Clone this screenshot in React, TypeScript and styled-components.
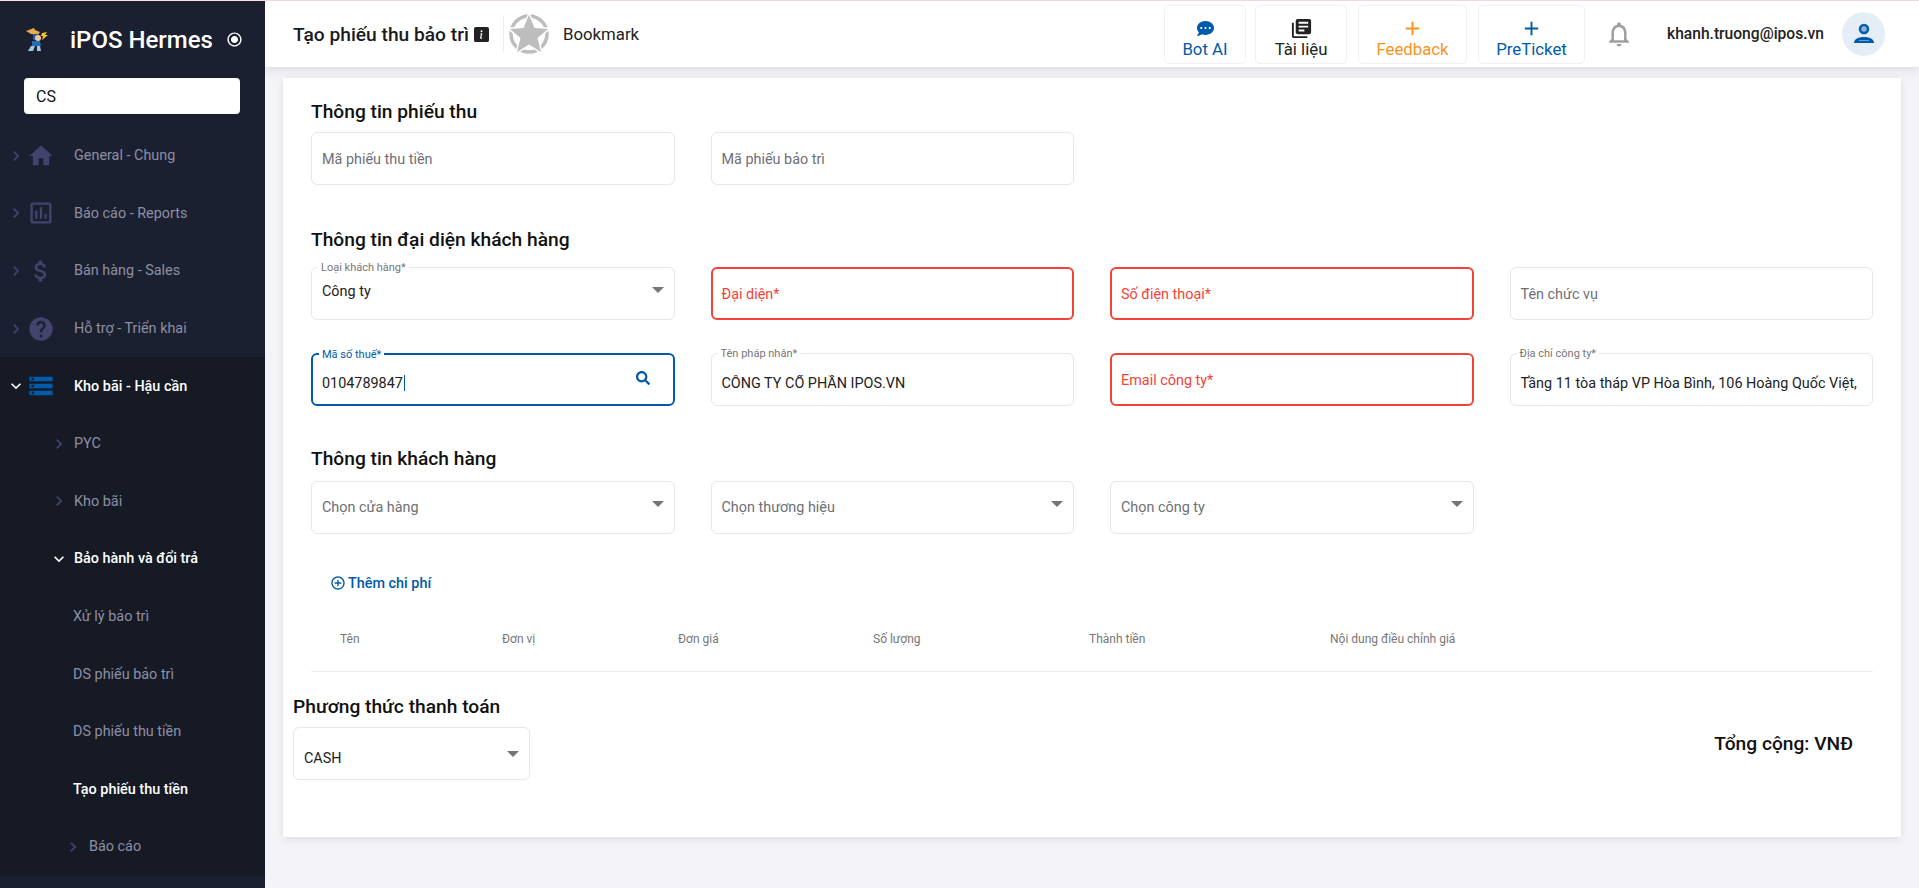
import React from 'react'
import styled, { createGlobalStyle } from 'styled-components'
import {
  MdAdd,
  MdAddCircleOutline,
  MdAttachMoney,
  MdChevronRight,
  MdExpandMore,
  MdHelp,
  MdHome,
  MdLibraryBooks,
  MdNotificationsNone,
  MdOutlineAssessment,
  MdRadioButtonChecked,
  MdStorage,
} from 'react-icons/md'
import { FaCommentDots, FaSearch } from 'react-icons/fa'
import { BsInfoSquareFill } from 'react-icons/bs'

const GlobalStyle = createGlobalStyle`
    html, body {
        margin: 0;
        padding: 0;
        height: 100%;
        overflow: hidden;
        background: #f4f4f8;
        font-family: Roboto, "Liberation Sans", sans-serif;
    }
    * {
        box-sizing: border-box;
    }
`
const Shell = styled.div`
    display: flex;
    flex-direction: column;
    width: 1919px;
    height: 888px;
`
const TopStrip = styled.div`
    height: 1px;
    background: #ffdfe6;
    flex: none;
`
const Body = styled.div`
    display: flex;
    flex: 1;
    min-height: 0;
`
const Sidebar = styled.aside`
    width: 265px;
    flex: none;
    background: #1a2030;
    display: flex;
    flex-direction: column;
`
const Brand = styled.div`
    height: 77px;
    padding: 0 0 0 25px;
    display: flex;
    align-items: center;
    color: #fff;
`
const BrandName = styled.div`
    font-size: 24px;
    font-weight: 500;
    margin-left: 21px;
    margin-right: 13px;
    white-space: nowrap;
`
const SearchBox = styled.div`
    width: 216px;
    height: 36px;
    margin: 0 0 13px 24px;
    padding: 0 12px;
    background: #fff;
    border-radius: 4px;
    display: flex;
    align-items: center;
    font-size: 16px;
    color: #111;
`
const Group = styled.div`
    background: #151a25;
`
const NavRow = styled.div<{ $indent: number; $active?: boolean; $bold?: boolean }>`
    height: 57.6px;
    display: flex;
    align-items: center;
    padding-left: ${p => p.$indent}px;
    font-size: 14.4px;
    font-weight: ${p => (p.$bold ? 500 : 400)};
    color: ${p => (p.$active ? '#fff' : '#8d8fa3')};
    white-space: nowrap;
`
const NavText = styled.span<{ $gap: number }>`
    margin-left: ${p => p.$gap}px;
`
const Chevron = styled.span<{ $active?: boolean }>`
    width: 20px;
    height: 20px;
    font-size: 20px;
    flex: none;
    display: flex;
    align-items: center;
    justify-content: center;
    color: ${p => (p.$active ? '#fff' : '#42446e')};
`
const NavIcon = styled.span<{ $active?: boolean }>`
    width: 28px;
    height: 28px;
    font-size: 28px;
    flex: none;
    margin-left: 1px;
    margin-right: 19px;
    display: flex;
    align-items: center;
    justify-content: center;
    color: ${p => (p.$active ? '#005baa' : '#42446e')};
`
const Main = styled.div`
    flex: 1;
    min-width: 0;
    display: flex;
    flex-direction: column;
`
const Header = styled.header`
    height: 66px;
    flex: none;
    background: #fff;
    display: flex;
    align-items: center;
    padding-left: 28px;
    box-shadow: 0 2px 10px rgba(40, 40, 70, 0.14);
    position: relative;
`
const PageTitle = styled.div`
    font-size: 19.2px;
    font-weight: 500;
    color: #1b1b1f;
    white-space: nowrap;
`
const InfoIcon = styled.span`
    font-size: 15px;
    color: #222;
    display: flex;
    margin-left: 5px;
`
const BookmarkWrap = styled.div`
    margin-left: 14px;
    padding-left: 5px;
    height: 36px;
    border-left: 1px solid #eeeeee;
    display: flex;
    align-items: center;
    font-size: 16.8px;
    color: #222;
`
const BookmarkLabel = styled.span`
    margin-left: 14px;
`
const HeaderActions = styled.div`
    margin-left: auto;
    display: flex;
    align-items: center;
    padding-right: 34px;
`
const ActionButton = styled.div<{ $width: number; $color: string; $gap: number }>`
    width: ${p => p.$width}px;
    height: 59px;
    margin-right: ${p => p.$gap}px;
    padding-top: 8px;
    border: 1px solid #f1f1f4;
    border-radius: 5px;
    display: flex;
    flex-direction: column;
    align-items: center;
    justify-content: center;
    font-size: 16.8px;
    line-height: 20px;
    color: ${p => p.$color};
`
const ActionIcon = styled.span<{ $color: string; $size: number }>`
    height: 22px;
    font-size: ${p => p.$size}px;
    display: flex;
    align-items: center;
    color: ${p => p.$color};
`
const Bell = styled.span`
    font-size: 30px;
    color: #a0a0a0;
    display: flex;
    margin-left: 8px;
`
const UserMail = styled.span`
    font-size: 15.6px;
    font-weight: 500;
    color: #222;
    margin-left: 33px;
`
const Avatar = styled.span`
    width: 43px;
    height: 44px;
    margin-left: 18px;
    border-radius: 50%;
    background: #e5edf6;
    display: flex;
    align-items: center;
    justify-content: center;
`
const Card = styled.main`
    width: 1618px;
    height: 759px;
    margin: 11px 0 0 18px;
    padding: 22px 28px 0;
    background: #fff;
    box-shadow: 0 2px 8px rgba(40, 40, 70, 0.12);
`
const SectionTitle = styled.h2<{ $top: number; $bottom: number }>`
    margin: ${p => p.$top}px 0 ${p => p.$bottom}px;
    font-size: 19.2px;
    line-height: 24px;
    font-weight: 500;
    color: #111;
`
const FieldGrid = styled.div`
    display: grid;
    grid-template-columns: repeat(4, 363.5px);
    column-gap: 36px;
    row-gap: 33px;
`
const FieldBox = styled.div<{ $state?: 'error' | 'focus' }>`
    position: relative;
    height: 53px;
    padding: 0 ${p => (p.$state ? 9 : 10)}px;
    display: flex;
    align-items: center;
    font-size: 14.4px;
    color: #222;
    white-space: nowrap;
    border-radius: 6px;
    background: #fff;
    border: ${p =>
      p.$state === 'error'
        ? '2px solid #f44336'
        : p.$state === 'focus'
        ? '2px solid #005baa'
        : '1px solid #e6e6ec'};
`
const FloatLabel = styled.span<{ $focus?: boolean }>`
    position: absolute;
    top: -6px;
    left: 6px;
    padding: 0 3px;
    background: #fff;
    font-size: 11px;
    line-height: 12px;
    color: ${p => (p.$focus ? '#005baa' : '#777')};
`
const Placeholder = styled.span<{ $error?: boolean; $shift: number }>`
    margin-top: ${p => p.$shift}px;
    color: ${p => (p.$error ? '#f44336' : '#6f6f76')};
`
const Value = styled.span<{ $shift: number }>`
    overflow: hidden;
    margin-top: ${p => p.$shift}px;
`
const Caret = styled.span`
    display: inline-block;
    width: 1px;
    height: 16px;
    margin-left: 1px;
    background: #005baa;
    vertical-align: -3px;
`
const Arrow = styled.span<{ $top: number }>`
    position: absolute;
    top: ${p => p.$top}px;
    right: 10px;
    width: 0;
    height: 0;
    border-left: 6px solid transparent;
    border-right: 6px solid transparent;
    border-top: 6px solid #757575;
`
const SearchIcon = styled.span`
    position: absolute;
    right: 23px;
    top: 16px;
    font-size: 14px;
    color: #005baa;
    display: flex;
`
const AddCost = styled.div`
    margin: 38px 0 0 19px;
    height: 22px;
    display: flex;
    align-items: center;
    gap: 2px;
    font-size: 14.4px;
    font-weight: 500;
    color: #005baa;
`
const CostIcon = styled.span`
    font-size: 16px;
    display: flex;
`
const CostHeader = styled.div`
    margin-top: 32px;
    height: 46px;
    padding-top: 5px;
    border-bottom: 1px solid #eeeeef;
    display: grid;
    grid-template-columns: 162px 176px 195px 216px 241px 1fr;
    padding-left: 29px;
    font-size: 12px;
    line-height: 16px;
    font-weight: 400;
    color: #777;
`
const PaymentRow = styled.div`
    margin: 23px 0 0 -18px;
    display: flex;
    justify-content: space-between;
`
const PaymentLeft = styled.div`
    width: 237px;
`
const PaymentTitle = styled.h2`
    margin: 0 0 8px;
    font-size: 19.2px;
    line-height: 24px;
    font-weight: 500;
    color: #111;
    white-space: nowrap;
`
const Total = styled.div`
    margin: 37px 20px 0 0;
    font-size: 19.2px;
    line-height: 24px;
    font-weight: 500;
    color: #111;
`

const Mascot = () => (
  <svg width="24" height="26" viewBox="0 0 24 26">
    <path d="M1 4l8-3 1 2 5 2-2 3-7-1z" fill="#e9a94f" />
    <path d="M8 7h5v6H8z" fill="#1f5f9e" />
    <circle cx="13" cy="11" r="3" fill="#f2c79e" />
    <path d="M17 6l5-1-2 3h3l-6 5 1-4h-2z" fill="#f3c531" />
    <path d="M7 14h8l1 5H7z" fill="#1f6fb5" />
    <path d="M6 19h4l-2 5H3zM12 19h3l1 5h-4z" fill="#a9c6e0" />
  </svg>
)

const StarBadge = () => (
  <svg width="40" height="40" viewBox="0 0 40 40">
    <circle cx="20" cy="20" r="18" fill="none" stroke="#bdbdbd" strokeWidth="3.500" />
    <polygon
      points="20,1 25.500,14 39,15 28.500,24 32,38 20,30.500 8,38 11.500,24 1,15 14.500,14"
      fill="#bdbdbd"
      stroke="#fff"
      strokeWidth="3"
      paintOrder="stroke"
      strokeLinejoin="round"
    />
  </svg>
)

const UserGlyph = () => (
  <svg width="22" height="22" viewBox="0 0 22 22">
    <circle cx="11" cy="6" r="4" fill="#8fb3d8" stroke="#005baa" strokeWidth="2.500" />
    <path d="M1 20c0-4 4.500-6 10-6s10 2 10 6z" fill="#005baa" />
    <path d="M6 17.500h10" stroke="#6f9fd0" strokeWidth="1" />
  </svg>
)

const Sub: React.FunctionComponent<{ text: string }> = ({ text }) => (
  <NavRow $indent={73}>{text}</NavRow>
)

const TopItem: React.FunctionComponent<{ text: string; icon: React.ReactNode }> = ({ text, icon }) => (
  <NavRow $indent={6}>
    <Chevron>
      <MdChevronRight />
    </Chevron>
    <NavIcon>{icon}</NavIcon>
    {text}
  </NavRow>
)

const Field: React.FunctionComponent<{
  label?: string
  value?: string
  placeholder?: string
  error?: boolean
  select?: boolean
  valueShift?: number
  arrowTop?: number
}> = ({ label, value, placeholder, error, select, valueShift = 8, arrowTop = 19 }) => (
  <FieldBox $state={error ? 'error' : undefined}>
    {label && <FloatLabel>{label}</FloatLabel>}
    {value && <Value $shift={valueShift}>{value}</Value>}
    {placeholder && (
      <Placeholder $error={error} $shift={select ? -1 : 2}>
        {placeholder}
      </Placeholder>
    )}
    {select && <Arrow $top={arrowTop} />}
  </FieldBox>
)

const App: React.FunctionComponent = () => {
  return (
    <>
      <GlobalStyle />
      <Shell>
        <TopStrip />
        <Body>
          <Sidebar>
            <Brand>
              <Mascot />
              <BrandName>iPOS Hermes</BrandName>
              <MdRadioButtonChecked size={17} />
            </Brand>
            <SearchBox>CS</SearchBox>
            <TopItem text="General - Chung" icon={<MdHome />} />
            <TopItem text="Báo cáo - Reports" icon={<MdOutlineAssessment />} />
            <TopItem text="Bán hàng - Sales" icon={<MdAttachMoney />} />
            <TopItem text="Hỗ trợ - Triển khai" icon={<MdHelp />} />
            <Group>
              <NavRow $indent={6} $active $bold>
                <Chevron $active>
                  <MdExpandMore />
                </Chevron>
                <NavIcon $active>
                  <MdStorage />
                </NavIcon>
                Kho bãi - Hậu cần
              </NavRow>
              <NavRow $indent={49}>
                <Chevron>
                  <MdChevronRight />
                </Chevron>
                <NavText $gap={5}>PYC</NavText>
              </NavRow>
              <NavRow $indent={49}>
                <Chevron>
                  <MdChevronRight />
                </Chevron>
                <NavText $gap={5}>Kho bãi</NavText>
              </NavRow>
              <NavRow $indent={49} $active $bold>
                <Chevron $active>
                  <MdExpandMore />
                </Chevron>
                <NavText $gap={5}>Bảo hành và đổi trả</NavText>
              </NavRow>
              <Sub text="Xử lý bảo trì" />
              <Sub text="DS phiếu bảo trì" />
              <Sub text="DS phiếu thu tiền" />
              <NavRow $indent={73} $active $bold>
                Tạo phiếu thu tiền
              </NavRow>
              <NavRow $indent={63}>
                <Chevron>
                  <MdChevronRight />
                </Chevron>
                <NavText $gap={6}>Báo cáo</NavText>
              </NavRow>
            </Group>
          </Sidebar>
          <Main>
            <Header>
              <PageTitle>Tạo phiếu thu bảo trì</PageTitle>
              <InfoIcon>
                <BsInfoSquareFill />
              </InfoIcon>
              <BookmarkWrap>
                <StarBadge />
                <BookmarkLabel>Bookmark</BookmarkLabel>
              </BookmarkWrap>
              <HeaderActions>
                <ActionButton $width={82} $gap={9} $color="#005baa">
                  <ActionIcon $color="#005baa" $size={17}>
                    <FaCommentDots />
                  </ActionIcon>
                  Bot AI
                </ActionButton>
                <ActionButton $width={92} $gap={11} $color="#222">
                  <ActionIcon $color="#222" $size={23}>
                    <MdLibraryBooks />
                  </ActionIcon>
                  Tài liệu
                </ActionButton>
                <ActionButton $width={109} $gap={11} $color="#f7931e">
                  <ActionIcon $color="#f7931e" $size={23}>
                    <MdAdd />
                  </ActionIcon>
                  Feedback
                </ActionButton>
                <ActionButton $width={107} $gap={11} $color="#005baa">
                  <ActionIcon $color="#005baa" $size={23}>
                    <MdAdd />
                  </ActionIcon>
                  PreTicket
                </ActionButton>
                <Bell>
                  <MdNotificationsNone />
                </Bell>
                <UserMail>khanh.truong@ipos.vn</UserMail>
                <Avatar>
                  <UserGlyph />
                </Avatar>
              </HeaderActions>
            </Header>
            <Card>
              <SectionTitle $top={0} $bottom={8}>Thông tin phiếu thu</SectionTitle>
              <FieldGrid>
                <Field placeholder="Mã phiếu thu tiền" />
                <Field placeholder="Mã phiếu bảo trì" />
              </FieldGrid>
              <SectionTitle $top={43} $bottom={15}>Thông tin đại diện khách hàng</SectionTitle>
              <FieldGrid>
                <Field label="Loại khách hàng*" value="Công ty" select valueShift={-5} />
                <Field placeholder="Đại diện*" error />
                <Field placeholder="Số điện thoại*" error />
                <Field placeholder="Tên chức vụ" />
                <FieldBox $state="focus">
                  <FloatLabel $focus>Mã số thuế*</FloatLabel>
                  <Value $shift={8}>
                    0104789847
                    <Caret />
                  </Value>
                  <SearchIcon>
                    <FaSearch />
                  </SearchIcon>
                </FieldBox>
                <Field label="Tên pháp nhân*" value="CÔNG TY CỔ PHẦN IPOS.VN" />
                <Field placeholder="Email công ty*" error />
                <Field label="Địa chỉ công ty*" value="Tầng 11 tòa tháp VP Hòa Bình, 106 Hoàng Quốc Việt," />
              </FieldGrid>
              <SectionTitle $top={41} $bottom={10}>Thông tin khách hàng</SectionTitle>
              <FieldGrid>
                <Field placeholder="Chọn cửa hàng" select />
                <Field placeholder="Chọn thương hiệu" select />
                <Field placeholder="Chọn công ty" select />
              </FieldGrid>
              <AddCost>
                <CostIcon>
                  <MdAddCircleOutline />
                </CostIcon>
                Thêm chi phí
              </AddCost>
              <CostHeader>
                <span>Tên</span>
                <span>Đơn vị</span>
                <span>Đơn giá</span>
                <span>Số lượng</span>
                <span>Thành tiền</span>
                <span>Nội dung điều chỉnh giá</span>
              </CostHeader>
              <PaymentRow>
                <PaymentLeft>
                  <PaymentTitle>Phương thức thanh toán</PaymentTitle>
                  <Field value="CASH" select arrowTop={23} valueShift={10} />
                </PaymentLeft>
                <Total>Tổng cộng: VNĐ</Total>
              </PaymentRow>
            </Card>
          </Main>
        </Body>
      </Shell>
    </>
  )
}

export default App
